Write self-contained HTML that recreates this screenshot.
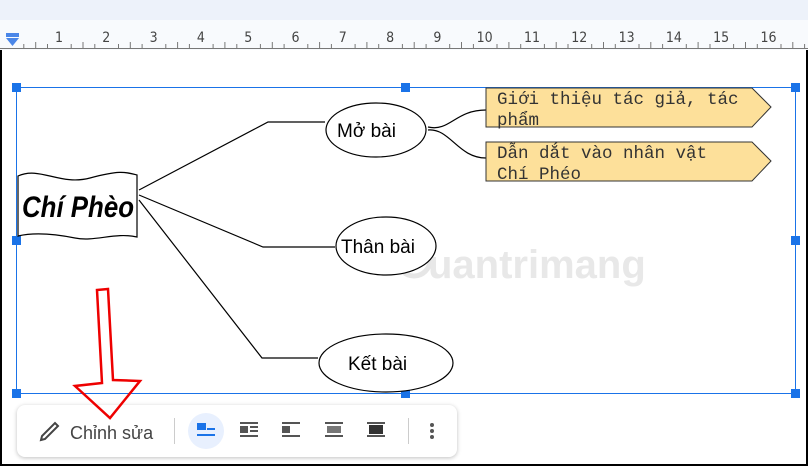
<!DOCTYPE html>
<html><head><meta charset="utf-8"><style>
body{margin:0;width:808px;height:466px;overflow:hidden;background:#fff;font-family:"Liberation Sans",sans-serif;position:relative}
.tb{position:absolute;left:0;top:0;width:808px;height:20px;background:#edf2fa}
.ruler{position:absolute;left:0;top:20px;width:808px;height:30px;background:#f8fafd}
.bar{position:absolute;left:17px;top:405px;width:440px;height:52px;background:#fff;border-radius:8px;box-shadow:0 1px 4px rgba(0,0,0,.25)}
</style></head><body>
<div class="tb"></div>
<div class="ruler"></div>
<svg width="808" height="466" style="position:absolute;left:0;top:0" font-family="Liberation Sans, sans-serif">
<g fill="#444" font-size="14" text-anchor="middle" font-family="DejaVu Sans Condensed, sans-serif" id="nums"></g>
<path d="M0 48.5H808" stroke="#777"/>
<g stroke="#777" id="ticks"></g>
<rect x="6" y="33" width="13" height="4" fill="#4a86e8"/><path d="M6 38h13l-6.5 8z" fill="#4a86e8"/>
<rect x="16.5" y="87.5" width="779" height="306" fill="none" stroke="#1a73e8"/>
<g fill="#1a73e8"><rect x="12" y="83" width="9" height="9"/><rect x="401" y="83" width="9" height="9"/><rect x="791" y="83" width="9" height="9"/><rect x="12" y="236" width="9" height="9"/><rect x="791" y="236" width="9" height="9"/><rect x="12" y="389" width="9" height="9"/><rect x="401" y="389" width="9" height="9"/><rect x="791" y="389" width="9" height="9"/></g>
<circle cx="414" cy="260" r="16" fill="none" stroke="#e6e6e6" stroke-width="5"/>
<text x="428" y="278" font-size="40" fill="#e8e8e8" font-weight="bold">uantrimang</text>
<g stroke="#000" fill="none" stroke-width="1.2">
<path d="M139 190L268 122H325"/><path d="M139 195L263 247H335"/><path d="M139 200L262 358H318"/>
<path d="M428 127C450 132 455 110 486 110"/><path d="M428 130C450 128 458 158 486 158"/>
</g>
<ellipse cx="376" cy="130" rx="50" ry="27" fill="#fff" stroke="#000" stroke-width="1.2"/>
<ellipse cx="386" cy="246" rx="50" ry="29" fill="#fff" stroke="#000" stroke-width="1.2"/>
<ellipse cx="386" cy="363" rx="67" ry="29" fill="#fff" stroke="#000" stroke-width="1.2"/>
<g font-size="19" fill="#000"><text x="337" y="137">Mở bài</text><text x="341" y="253">Thân bài</text><text x="348" y="370">Kết bài</text></g>
<path d="M486 88H752L771 107L752 127H486Z" fill="#fde09a" stroke="#333"/>
<path d="M486 142H752L771 161L752 181H486Z" fill="#fde09a" stroke="#333"/>
<g font-family="Liberation Mono, monospace" font-size="17.5" fill="#333"><text x="497" y="104">Giới thiệu tác giả, tác</text><text x="497" y="125">phẩm</text><text x="497" y="158">Dẫn dắt vào nhân vật</text><text x="497" y="179">Chí Phéo</text></g>
<path d="M18 176C40 166 60 186 90 178S125 172 137 175V237C115 232 95 242 75 238S35 232 18 236Z" fill="#fff" stroke="#000" stroke-width="1.2"/>
<text x="22" y="217" font-size="30" font-weight="bold" font-style="italic" font-family="Liberation Sans, sans-serif" textLength="112" lengthAdjust="spacingAndGlyphs">Chí Phèo</text>
<rect x="0" y="50" width="2" height="416" fill="#000"/><rect x="806" y="50" width="2" height="416" fill="#000"/><rect x="0" y="464" width="808" height="2" fill="#000"/>
</svg>
<div class="bar"></div>
<svg width="808" height="466" style="position:absolute;left:0;top:0">
<path d="M41 440l4-1 13-13-3-3-13 13z" fill="none" stroke="#444" stroke-width="2"/>
<text x="70" y="439" font-family="Liberation Sans, sans-serif" font-size="18" fill="#444">Chỉnh sửa</text>
<rect x="174" y="418" width="1" height="26" fill="#ccc"/>
<circle cx="206" cy="431" r="18" fill="#e8f0fe"/>
<g fill="#1a73e8"><rect x="197" y="423" width="9" height="7"/><rect x="207" y="428" width="8" height="2"/><rect x="197" y="434" width="18" height="2"/></g>
<g fill="#555"><rect x="240" y="422" width="18" height="2"/><rect x="240" y="426" width="8" height="7"/><rect x="250" y="426" width="8" height="2"/><rect x="250" y="430" width="8" height="2"/><rect x="240" y="435" width="18" height="2"/>
<rect x="282" y="422" width="18" height="2"/><rect x="282" y="426" width="8" height="7"/><rect x="282" y="435" width="18" height="2"/>
<rect x="325" y="422" width="18" height="2"/><rect x="327" y="426" width="14" height="7" fill="#777"/><rect x="325" y="435" width="18" height="2"/>
<rect x="367" y="422" width="18" height="2"/><rect x="369" y="425" width="14" height="9" fill="#333"/><rect x="367" y="435" width="18" height="2"/>
<rect x="408" y="418" width="1" height="26" fill="#ccc"/>
<circle cx="432" cy="425" r="2"/><circle cx="432" cy="431" r="2"/><circle cx="432" cy="437" r="2"/></g>
<path d="M97 290L108 289L113 380L140 381L110 418L75 386L102 383Z" fill="none" stroke="#e00" stroke-width="2.5"/>
</svg>
<script>
var n=document.getElementById('nums'),s='';
for(var i=1;i<=16;i++){s+='<text x="'+(59+(i-1)*47.3).toFixed(1)+'" y="42">'+i+'</text>';}
n.innerHTML=s;
var g=document.getElementById('ticks');s='';
for(var i=0;i<70;i++){var x=12+i*11.83;if(x>808)break;var h=(i%4==0)?0:(i%2==0?42:44);if(h)s+='<path d="M'+x.toFixed(1)+' '+h+'V48"/>';}
g.innerHTML=s;
</script>
</body></html>
